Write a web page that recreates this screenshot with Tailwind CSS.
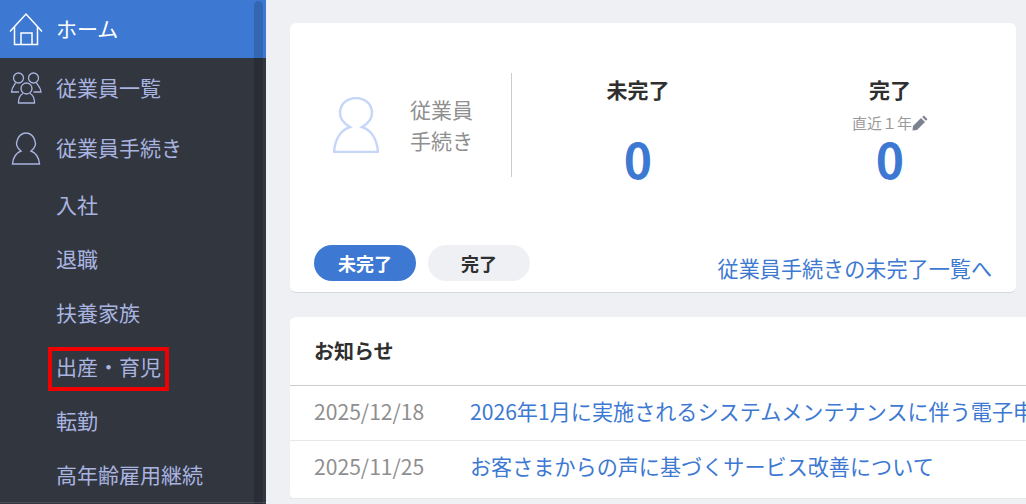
<!DOCTYPE html>
<html lang="ja">
  <head>
    <meta charset="utf-8">
    <title>ホーム</title>
    <script src="https://cdn.jsdelivr.net/npm/@tailwindcss/browser@4"></script>
  </head>
  <body class="w-[1026px] h-[504px] overflow-hidden bg-[#eef0f4] font-['Noto_Sans_CJK_JP','Noto_Sans',sans-serif]">
    <div class="flex h-[504px]">
      <!-- sidebar -->
      <aside class="relative w-[266px] h-[504px] shrink-0 bg-[#32363f] text-[21px] text-[#a9b4e0] overflow-hidden">
        <a class="flex items-center h-[58px] pl-[9px] gap-[13px] bg-[#3d79d2] text-white">
          <svg class="w-[34px] h-[34px] -mt-[1px]" viewBox="0 0 34 34" fill="none" stroke="currentColor" stroke-width="1.5"><path d="M1 19.500 L17 2 L33 19.500"/><path d="M5.500 15 V32.500 H28.500 V15"/><path d="M12 32.500 V21 H23 V32.500"/></svg>
          <span class="-mt-[1px]">ホーム</span>
        </a>
        <a class="flex items-center h-[60px] pl-[9px] gap-[13px]">
          <svg class="w-[34px] h-[34px]" viewBox="0 0 34 34" fill="none" stroke="currentColor" stroke-width="1.300"><circle cx="9.500" cy="7" r="5"/><circle cx="24.500" cy="7" r="5"/><circle cx="17.500" cy="17.500" r="5.500"/><path d="M6.500 11.500 C6.500 13.500 3 15 2.500 21 H10"/><path d="M27.500 11.500 C27.500 13.500 31.500 15 32 21 H24.500"/><path d="M14 22.500 C11 24 9.500 27 9.500 32 H25.500 C25.500 27 24 24 21 22.500"/></svg>
          <span>従業員一覧</span>
        </a>
        <a class="flex items-center h-[60px] pl-[9px] gap-[13px]">
          <svg class="w-[34px] h-[34px]" viewBox="0 0 34 34" fill="none" stroke="currentColor" stroke-width="1.4"><path d="M12 20 C8 17 7 13 8 10 C9 5 13 2 17 2 C21 2 25 5 26 10 C27 13 26 17 22 20 C27 22 30 27 30.500 33 H3.500 C4 27 7 22 12 20 Z"/></svg>
          <span>従業員手続き</span>
        </a>
        <ul class="pl-[56px]">
          <li class="h-[55px] leading-[56px] -mt-[2px]">入社</li>
          <li class="h-[54px] leading-[54px]">退職</li>
          <li class="h-[54px] leading-[54px]">扶養家族</li>
          <li class="relative h-[54px] leading-[54px]">出産・育児
            <span class="absolute left-[-8px] top-[8px] w-[121px] h-[44px] border-[4px] border-[#f00000]"></span>
          </li>
          <li class="h-[54px] leading-[54px]">転勤</li>
          <li class="h-[54px] leading-[54px]">高年齢雇用継続</li>
        </ul>
        <div class="absolute left-0 bottom-[1px] w-full h-px bg-[#4a4f5e]"></div>
        <!-- scrollbar -->
        <div class="absolute right-[3px] top-[1px] w-[9px] h-full rounded-t-full bg-black/15"></div>
      </aside>

      <main class="flex-1 min-w-0 overflow-hidden pl-6 pt-[23px]">
        <section class="w-[726px] h-[270px] bg-white rounded-md border-b border-[#d3d7de] flex flex-col pl-6">
          <div class="flex h-[222px] pt-[50px]">
            <div class="flex w-[198px] h-[104px] border-r border-[#cccccc]">
              <svg class="w-[46px] h-[56px] ml-[19px] mt-[24px]" viewBox="0 0 46 56" fill="none" stroke="#c5d6f9" stroke-width="2.400"><path d="M17 30 C10 26 7 21 7 16 C7 7 14 1 23 1 C32 1 39 7 39 16 C39 21 36 26 29 30 C38 33 44 42 45 55 H1 C2 42 8 33 17 30 Z"/></svg>
              <p class="ml-[31px] mt-[21px] text-[21px] leading-[31px] text-[#8f8f8f]">従業員<br>手続き</p>
            </div>
            <div class="w-[252px] text-center">
              <p class="text-[21px] leading-[32px] font-bold text-[#2f2f2f]">未完了</p>
              <p class="text-[48px] leading-[48px] font-bold text-[#3d79d2] mt-[29px]">0</p>
            </div>
            <div class="w-[252px] text-center">
              <p class="text-[21px] leading-[32px] font-bold text-[#2f2f2f]">完了</p>
              <p class="flex justify-center items-center text-[15px] leading-[22px] mt-[7px] text-[#9a9a9a]">直近１年
                <svg class="w-[16px] h-[16px]" viewBox="0 0 16 16" fill="#7d8290"><path d="M11.800 0.500 L15.500 4.200 L13.900 5.800 L10.200 2.100 Z"/><path d="M9 3 L13 7 L5 15 L0.500 15.500 L1 11 Z"/></svg>
              </p>
              <p class="text-[48px] leading-[48px] font-bold text-[#3d79d2]">0</p>
            </div>
          </div>
          <div class="flex items-start justify-between pr-6">
            <div class="flex gap-3">
              <button class="w-[102px] h-9 rounded-full bg-[#3d79d2] text-white text-[18px] font-bold">未完了</button>
              <button class="w-[102px] h-9 rounded-full bg-[#eef0f4] text-[#2f2f2f] text-[18px] font-bold">完了</button>
            </div>
            <a class="mt-[8px] leading-[30px] text-[21.120px] text-[#3d79d2]">従業員手続きの未完了一覧へ</a>
          </div>
        </section>

        <section class="mt-6 w-[800px] bg-white rounded-md">
          <h2 class="h-[69px] leading-[68px] px-6 text-[20px] font-bold text-[#2f2f2f] border-b border-[#cccccc]">お知らせ</h2>
          <div class="flex h-[55px] items-center pl-6 pb-[2px] border-b border-[#e8e8e8] text-[21.120px] whitespace-nowrap overflow-hidden">
            <span class="w-[156px] text-[#8f8f8f] shrink-0">2025/12/18</span>
            <a class="text-[#3d79d2]">2026年1月に実施されるシステムメンテナンスに伴う電子申請の停止について</a>
          </div>
          <div class="flex h-[58px] items-center pl-6 pb-[5px] border-b border-[#e8e8e8] text-[21.120px] whitespace-nowrap">
            <span class="w-[156px] text-[#8f8f8f] shrink-0">2025/11/25</span>
            <a class="text-[#3d79d2]">お客さまからの声に基づくサービス改善について</a>
          </div>
        </section>
      </main>
    </div>
  </body>
</html>
